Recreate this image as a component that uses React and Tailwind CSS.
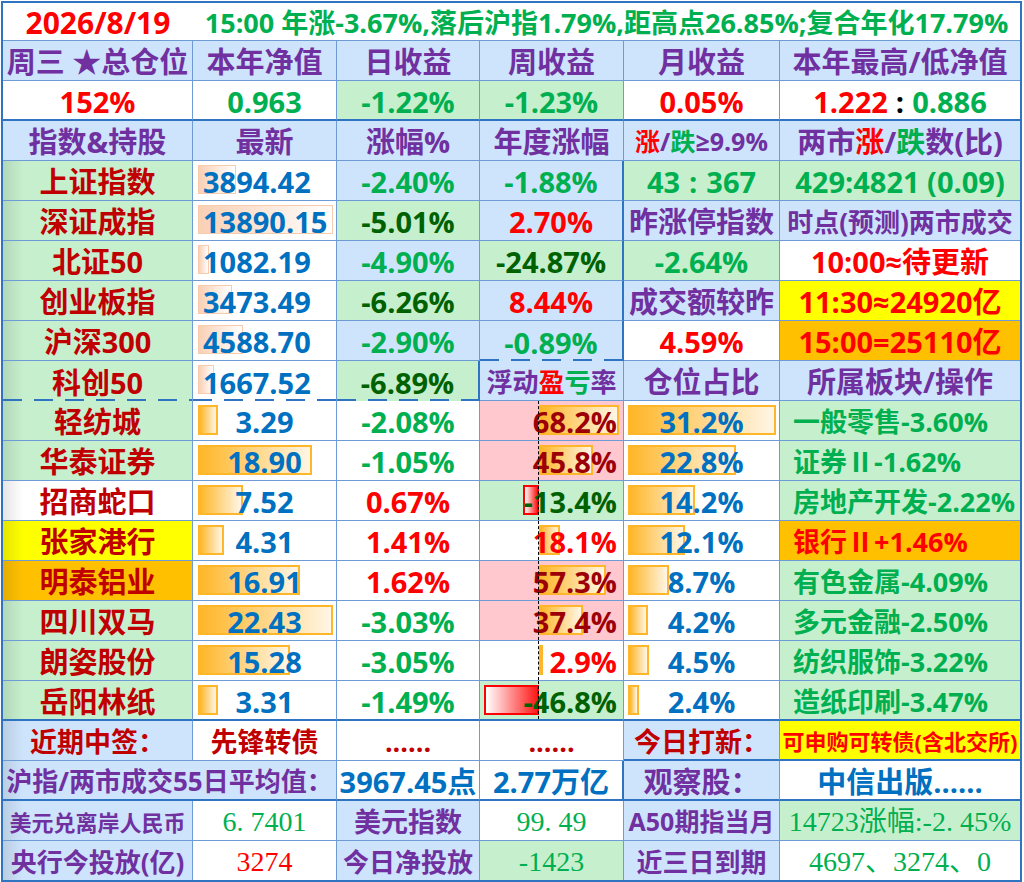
import React from "react";

const LB = "bg-[#cee4fc]";
const GRB = "bg-[#c6efce]";
const PK = "bg-[#ffc7ce]";
const YL = "bg-[#ffff00]";
const OR = "bg-[#ffc000]";
const WH = "bg-white";

const P = "text-[#7030a0]";
const DR = "text-[#c00000]";
const R = "text-[#ff0000]";
const G = "text-[#00b050]";
const DG = "text-[#006100]";
const B = "text-[#0070c0]";
const PKT = "text-[#9c0006]";
const SERIF = "font-['Liberation_Serif','Noto_Sans_CJK_SC',serif] font-normal text-[28px]";

function Cell({ bg = WH, bb = "t", br = "t", grad = false, justify = "center", className = "", children }) {
  let cls = "relative flex items-center overflow-hidden whitespace-nowrap pt-[2px] ";
  cls += justify === "center" ? "justify-center " : justify === "start" ? "justify-start " : "justify-end ";
  cls +=
    bb === "T"
      ? "border-b-2 border-b-[#2f74c0] "
      : bb === "n" || bb === "d"
      ? "border-b-0 "
      : "border-b border-b-[#6d9bd6] ";
  cls += br === "T" ? "border-r-2 border-r-[#2f74c0] " : br === "n" ? "border-r-0 " : "border-r border-r-[#6d9bd6] ";
  cls += bg + " ";
  if (grad) cls += "bg-[image:linear-gradient(to_right,rgba(0,0,0,0.10),rgba(0,0,0,0)_20px)] ";
  cls += className;
  return (
    <div className={cls}>
      {children}
      {bb === "d" && (
        <span className="absolute left-0 right-0 bottom-0 h-[2px] bg-[image:repeating-linear-gradient(to_right,#2f74c0_0px,#2f74c0_19px,transparent_19px,transparent_31px)]" />
      )}
    </div>
  );
}

function Bar({ kind, left, w }) {
  const cls =
    kind === "idx"
      ? "top-[4px] h-[29px] border border-[#f8cbad] bg-[image:linear-gradient(to_right,#f9d0b4,#ffffff)]"
      : kind === "neg"
      ? "top-[4px] h-[30px] border-2 border-[#ff0000] bg-[image:linear-gradient(to_right,#ffffff,#ff1a1a)]"
      : "top-[4px] h-[30px] border-2 border-[#ffb628] bg-[image:linear-gradient(to_right,#ffb628,#fff6e6)]";
  return <span className={"absolute " + cls} style={{ left, width: w }} />;
}

function T({ c, children, className = "" }) {
  return <span className={"relative " + c + " " + className}>{children}</span>;
}

function IdxPrice({ p, bb }) {
  const w = (parseFloat(p) / 13890.15) * 135;
  return (
    <Cell justify="start" className="pl-[10px]" bb={bb}>
      <Bar kind="idx" left={5} w={w} />
      <T c={B}>{p}</T>
    </Cell>
  );
}

const stocks = [
  { n: "轻纺城", nb: GRB, p: "3.29", c: "-2.08%", cc: G, pl: 68.2, plb: PK, plc: PKT, pos: "31.2", s: "一般零售-3.60%", sb: GRB, sc: G },
  { n: "华泰证券", nb: GRB, p: "18.90", c: "-1.05%", cc: G, pl: 45.8, plb: PK, plc: PKT, pos: "22.8", s: "证券Ⅱ-1.62%", sb: GRB, sc: G },
  { n: "招商蛇口", nb: WH, p: "7.52", c: "0.67%", cc: R, pl: -13.4, plb: GRB, plc: DG, pos: "14.2", s: "房地产开发-2.22%", sb: GRB, sc: G },
  { n: "张家港行", nb: YL, p: "4.31", c: "1.41%", cc: R, pl: 18.1, plb: WH, plc: R, pos: "12.1", s: "银行Ⅱ+1.46%", sb: OR, sc: R },
  { n: "明泰铝业", nb: OR, p: "16.91", c: "1.62%", cc: R, pl: 57.3, plb: PK, plc: PKT, pos: "8.7", s: "有色金属-4.09%", sb: GRB, sc: G },
  { n: "四川双马", nb: GRB, p: "22.43", c: "-3.03%", cc: G, pl: 37.4, plb: PK, plc: PKT, pos: "4.2", s: "多元金融-2.50%", sb: GRB, sc: G },
  { n: "朗姿股份", nb: GRB, p: "15.28", c: "-3.05%", cc: G, pl: 2.9, plb: WH, plc: R, pos: "4.5", s: "纺织服饰-3.22%", sb: GRB, sc: G },
  { n: "岳阳林纸", nb: GRB, p: "3.31", c: "-1.49%", cc: G, pl: -46.8, plb: GRB, plc: DG, pos: "2.4", s: "造纸印刷-3.47%", sb: GRB, sc: G },
];

export default function App() {
  return (
    <div className="w-[1024px] h-[882px] bg-white overflow-hidden">
      <div className="ml-[1px] mt-[1px] w-[1021px] border-2 border-[#2f74c0] grid grid-cols-[190px_144px_143px_144px_156px_240px] grid-rows-[38px_repeat(20,40px)_39px] font-['Open_Sans','Noto_Sans_CJK_SC',sans-serif] font-bold text-[29px] leading-none">
        {/* Row 1: title */}
        <Cell br="n" className="border-b-[#4f86cc]">
          <T c={R} className="text-[30px] leading-[30px]">2026/8/19</T>
        </Cell>
        <Cell br="n" className="col-span-5 border-b-[#4f86cc]">
          <T c={G} className="text-[27px]">15:00 年涨-3.67%,落后沪指1.79%,距高点26.85%;复合年化17.79%</T>
        </Cell>

        {/* Row 2 */}
        <Cell bg={LB}><T c={P}>周三 ★总仓位</T></Cell>
        <Cell bg={LB}><T c={P}>本年净值</T></Cell>
        <Cell bg={LB}><T c={P}>日收益</T></Cell>
        <Cell bg={LB}><T c={P}>周收益</T></Cell>
        <Cell bg={LB}><T c={P}>月收益</T></Cell>
        <Cell bg={LB} br="n"><T c={P}>本年最高/低净值</T></Cell>

        {/* Row 3 */}
        <Cell bb="T"><T c={R}>152%</T></Cell>
        <Cell bb="T"><T c={G}>0.963</T></Cell>
        <Cell bb="T" bg={GRB}><T c={G}>-1.22%</T></Cell>
        <Cell bb="T" bg={GRB}><T c={G}>-1.23%</T></Cell>
        <Cell bb="T"><T c={R}>0.05%</T></Cell>
        <Cell bb="T" br="n">
          <T c={R}>1.222</T>
          <T c="text-black" className="px-[8px]">:</T>
          <T c={G}>0.886</T>
        </Cell>

        {/* Row 4 */}
        <Cell bg={LB}><T c={P}>指数&amp;持股</T></Cell>
        <Cell bg={LB}><T c={P}>最新</T></Cell>
        <Cell bg={LB}><T c={P}>涨幅%</T></Cell>
        <Cell bg={LB}><T c={P}>年度涨幅</T></Cell>
        <Cell bg={LB}>
          <span className="relative text-[25px]">
            <span className={R}>涨</span>
            <span className={P}>/</span>
            <span className={G}>跌</span>
            <span className={P}>≥9.9%</span>
          </span>
        </Cell>
        <Cell bg={LB} br="n">
          <span className="relative">
            <span className={P}>两市</span>
            <span className={R}>涨</span>
            <span className={P}>/</span>
            <span className={G}>跌</span>
            <span className={P}>数(比)</span>
          </span>
        </Cell>

        {/* Row 5 上证指数 */}
        <Cell bg={GRB} grad><T c={DR}>上证指数</T></Cell>
        <IdxPrice p="3894.42" />
        <Cell bg={LB}><T c={G}>-2.40%</T></Cell>
        <Cell bg={LB} br="T"><T c={G}>-1.88%</T></Cell>
        <Cell bg={GRB}>
          <T c={G}>43</T>
          <T c={G} className="px-[9px]">:</T>
          <T c={G}>367</T>
        </Cell>
        <Cell bg={GRB} br="n"><T c={G}>429:4821 (0.09)</T></Cell>

        {/* Row 6 深证成指 */}
        <Cell bg={GRB} grad><T c={DR}>深证成指</T></Cell>
        <IdxPrice p="13890.15" />
        <Cell bg={GRB}><T c={DG}>-5.01%</T></Cell>
        <Cell bg={LB} br="T"><T c={R}>2.70%</T></Cell>
        <Cell bg={LB}><T c={P}>昨涨停指数</T></Cell>
        <Cell bg={LB} br="n"><T c={P} className="text-[26px]">时点(预测)两市成交</T></Cell>

        {/* Row 7 北证50 */}
        <Cell bg={GRB} grad><T c={DR}>北证50</T></Cell>
        <IdxPrice p="1082.19" />
        <Cell bg={LB}><T c={G}>-4.90%</T></Cell>
        <Cell bg={GRB} br="T"><T c={DG}>-24.87%</T></Cell>
        <Cell bg={GRB}><T c={G}>-2.64%</T></Cell>
        <Cell br="n"><T c={R}>10:00≈待更新</T></Cell>

        {/* Row 8 创业板指 */}
        <Cell bg={GRB} grad><T c={DR}>创业板指</T></Cell>
        <IdxPrice p="3473.49" />
        <Cell bg={GRB}><T c={DG}>-6.26%</T></Cell>
        <Cell bg={LB} br="T"><T c={R}>8.44%</T></Cell>
        <Cell bg={LB}><T c={P}>成交额较昨</T></Cell>
        <Cell bg={YL} br="n"><T c={R}>11:30≈24920亿</T></Cell>

        {/* Row 9 沪深300 */}
        <Cell bg={GRB} grad><T c={DR}>沪深300</T></Cell>
        <IdxPrice p="4588.70" />
        <Cell bg={LB}><T c={G}>-2.90%</T></Cell>
        <Cell bg={LB} br="T" bb="d"><T c={G}>-0.89%</T></Cell>
        <Cell><T c={R}>4.59%</T></Cell>
        <Cell bg={OR} br="n"><T c={R}>15:00=25110亿</T></Cell>

        {/* Row 10 科创50 */}
        <Cell bg={GRB} grad bb="d"><T c={DR}>科创50</T></Cell>
        <IdxPrice p="1667.52" bb="d" />
        <Cell bg={GRB} bb="d" br="T"><T c={DG}>-6.89%</T></Cell>
        <Cell bg={LB}>
          <span className="relative text-[26px]">
            <span className={P}>浮动</span>
            <span className={R}>盈</span>
            <span className={G}>亏</span>
            <span className={P}>率</span>
          </span>
        </Cell>
        <Cell bg={LB}><T c={P}>仓位占比</T></Cell>
        <Cell bg={LB} br="n"><T c={P}>所属板块/操作</T></Cell>

        {/* Stock rows */}
        {stocks.map((s, i) => {
          const last = i === stocks.length - 1;
          const bb = last ? "T" : "t";
          return (
            <React.Fragment key={s.n}>
              <Cell bg={s.nb} grad bb={bb}><T c={DR}>{s.n}</T></Cell>
              <Cell bb={bb}>
                <Bar kind="pos" left={5} w={(parseFloat(s.p) / 22.43) * 135} />
                <T c={B}>{s.p}</T>
              </Cell>
              <Cell bb={bb}><T c={s.cc}>{s.c}</T></Cell>
              <Cell bg={s.plb} bb={bb} justify="end" className="pr-[6px]">
                <Bar kind={s.pl < 0 ? "neg" : "pos"} left={s.pl < 0 ? 59 - Math.abs(s.pl) * 1.17 : 59} w={Math.abs(s.pl) * 1.17} />
                <T c={s.plc}>{s.pl.toFixed(1)}%</T>
                <span className="absolute left-[58px] top-0 bottom-0 w-0 border-l border-dashed border-l-black" />
              </Cell>
              <Cell bb={bb}>
                <Bar kind="pos" left={4} w={parseFloat(s.pos) * 4.74} />
                <T c={B}>{s.pos}%</T>
              </Cell>
              <Cell bg={s.sb} bb={bb} br="n" justify="start" className="pl-[13px]">
                <T c={s.sc} className="text-[27px]">{s.s}</T>
              </Cell>
            </React.Fragment>
          );
        })}

        {/* Row 19 近期中签 */}
        <Cell bg={LB} grad><T c={DR} className="text-[27px]">近期中签：</T></Cell>
        <Cell><T c={DR} className="text-[27px]">先锋转债</T></Cell>
        <Cell><T c={DR} className="text-[27px]">......</T></Cell>
        <Cell><T c={DR} className="text-[27px]">......</T></Cell>
        <Cell bg={LB} bb="T"><T c={DR} className="text-[27px]">今日打新：</T></Cell>
        <Cell bg={YL} bb="T" br="n"><T c={R} className="text-[22px]">可申购可转债(含北交所)</T></Cell>

        {/* Row 20 沪指 */}
        <Cell bg={LB} grad bb="T" className="col-span-2"><T c={P} className="text-[26px]">沪指/两市成交55日平均值：</T></Cell>
        <Cell bb="T"><T c={B}>3967.45点</T></Cell>
        <Cell bb="T" br="T"><T c={B}>2.77万亿</T></Cell>
        <Cell bg={LB} bb="T"><T c={P}>观察股：</T></Cell>
        <Cell bb="T" br="n"><T c={B}>中信出版......</T></Cell>

        {/* Row 21 美元 */}
        <Cell bg={LB} grad><T c={P} className="text-[22px]">美元兑离岸人民币</T></Cell>
        <Cell><T c={G} className={SERIF}>6. 7401</T></Cell>
        <Cell bg={LB}><T c={P} className="text-[27px]">美元指数</T></Cell>
        <Cell><T c={G} className={SERIF}>99. 49</T></Cell>
        <Cell bg={LB}><T c={P} className="text-[25px]">A50期指当月</T></Cell>
        <Cell bg={GRB} br="n"><T c={G} className={SERIF}>14723涨幅:-2. 45%</T></Cell>

        {/* Row 22 央行 */}
        <Cell bg={LB} grad bb="n"><T c={P} className="text-[26px]">央行今投放(亿)</T></Cell>
        <Cell bb="n"><T c={R} className={SERIF}>3274</T></Cell>
        <Cell bg={LB} bb="n"><T c={P} className="text-[26px]">今日净投放</T></Cell>
        <Cell bg={GRB} bb="n"><T c={G} className={SERIF}>-1423</T></Cell>
        <Cell bg={LB} bb="n"><T c={P} className="text-[26px]">近三日到期</T></Cell>
        <Cell bb="n" br="n"><T c={G} className={SERIF}>4697、3274、0</T></Cell>
      </div>
    </div>
  );
}
